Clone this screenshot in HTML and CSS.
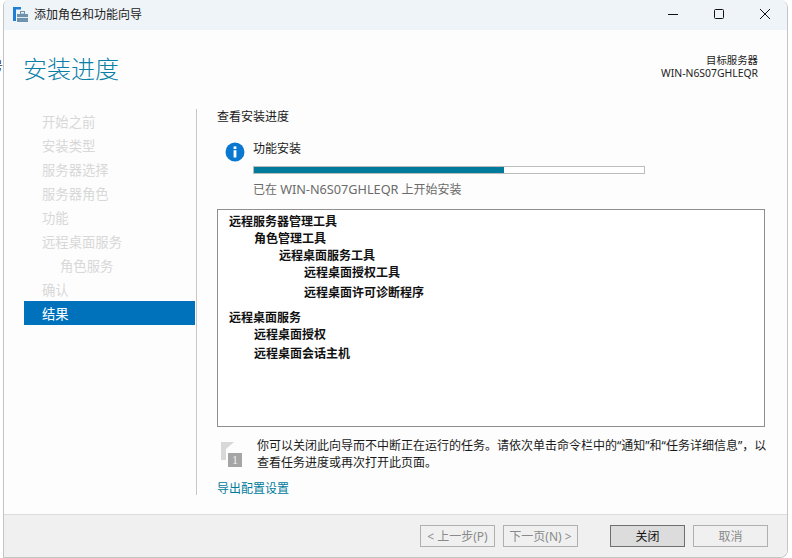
FILE: index.html
```html
<!DOCTYPE html>
<html lang="zh-CN">
<head>
<meta charset="utf-8">
<title>添加角色和功能向导</title>
<link rel="stylesheet" href="styles.css">
</head>
<body>
<div class="stray">号</div>
<div class="window">
  <header class="titlebar">
    <svg class="app-icon" width="15" height="15" viewBox="0 0 15 15"><path d="M0 0h8v2.600H3V14H0z" fill="#1f7fd6"/><rect x="4" y="7" width="11" height="8" fill="#6f93ad"/><rect x="7.500" y="4.500" width="4" height="2.600" fill="none" stroke="#6f93ad"/><rect x="4" y="10" width="11" height="1" fill="#dfe8ee"/></svg>
    <span class="title-text">添加角色和功能向导</span>
    <div class="controls">
      <svg width="12" height="12" viewBox="0 0 12 12"><path d="M1 6.500h10" stroke="#111" stroke-width="1" fill="none"/></svg>
      <svg width="12" height="12" viewBox="0 0 12 12"><rect x="1.500" y="1.500" width="9" height="9" rx="1" stroke="#111" fill="none"/></svg>
      <svg width="12" height="12" viewBox="0 0 12 12"><path d="M1 1l10 10M11 1L1 11" stroke="#111" fill="none"/></svg>
    </div>
  </header>
  <div class="head">
    <h1>安装进度</h1>
    <div class="target"><div>目标服务器</div><div>WIN-N6S07GHLEQR</div></div>
  </div>
  <div class="main">
    <nav class="side">
      <div class="step">开始之前</div>
      <div class="step">安装类型</div>
      <div class="step">服务器选择</div>
      <div class="step">服务器角色</div>
      <div class="step">功能</div>
      <div class="step">远程桌面服务</div>
      <div class="step sub">角色服务</div>
      <div class="step">确认</div>
      <div class="step active">结果</div>
    </nav>
    <section class="content">
      <div class="caption">查看安装进度</div>
      <div class="status">
        <svg class="info" width="20" height="20" viewBox="0 0 20 20"><circle cx="10" cy="10" r="9.500" fill="#0a78d0"/><rect x="8.600" y="8.200" width="2.800" height="7.300" fill="#fff"/><rect x="8.600" y="4.400" width="2.800" height="2.600" fill="#fff"/></svg>
        <div class="status-body">
          <div class="status-name">功能安装</div>
          <div class="bar"><div class="fill" style="width:64.1%"></div></div>
          <div class="status-note">已在 <span class="host">WIN-N6S07GHLEQR</span> 上开始安装</div>
        </div>
      </div>
      <div class="tree">
        <div class="row l0 r1">远程服务器管理工具</div>
        <div class="row l1 r1">角色管理工具</div>
        <div class="row l2 r1">远程桌面服务工具</div>
        <div class="row l3 r1">远程桌面授权工具</div>
        <div class="row l3 r2">远程桌面许可诊断程序</div>
        <div class="row l0 r3">远程桌面服务</div>
        <div class="row l1 r1">远程桌面授权</div>
        <div class="row l1 r4">远程桌面会话主机</div>
      </div>
      <div class="notice">
        <div class="flag">
          <svg width="22" height="28" viewBox="0 0 22 28"><path d="M0 0h13L5 7v11H0z" fill="#d8d8d8"/><rect x="7" y="11" width="14" height="14" fill="#a5a5a5"/></svg>
          <span class="flag-num">1</span>
        </div>
        <p>你可以关闭此向导而不中断正在运行的任务。请依次单击命令栏中的“通知”和“任务详细信息”，以<br>查看任务进度或再次打开此页面。</p>
      </div>
      <a class="export">导出配置设置</a>
    </section>
  </div>
  <footer class="footer">
    <button class="btn" disabled>&lt; 上一步(P)</button>
    <button class="btn" disabled>下一页(N) &gt;</button>
    <button class="btn primary">关闭</button>
    <button class="btn" disabled>取消</button>
  </footer>
</div>
</body>
</html>
```
FILE: styles.css
```css
* { box-sizing: border-box; }
html, body { margin: 0; height: 100%; overflow: hidden; }
body {
  width: 792px;
  height: 558px;
  background: #fff;
  font-family: "Noto Sans", "Noto Sans CJK SC", sans-serif;
  font-size: 12px;
  color: #1a1a1a;
  padding: 0 4px 0 3px;
  position: relative;
}
.stray {
  position: absolute;
  left: -9px;
  top: 60px;
  font-size: 12px;
  line-height: 14px;
  color: #333;
}
.window {
  width: 785px;
  height: 558px;
  border: 1px solid #c4c4c4;
  border-top: 0;
  border-radius: 6px 8px 8px 0;
  background: #fdfdfd;
  display: flex;
  flex-direction: column;
  position: relative;
  overflow: hidden;
}
.titlebar {
  height: 30px;
  flex: none;
  background: #eff4f9;
  display: flex;
  align-items: center;
  padding-left: 9px;
}
.app-icon { flex: none; margin-top: -2px; }
.title-text { margin-left: 6px; font-size: 12px; line-height: 16px; color: #222; }
.controls {
  margin-left: auto;
  display: flex;
  gap: 34px;
  margin-right: 16px;
  margin-top: -2px;
}
.head {
  height: 79px;
  flex: none;
  display: flex;
  justify-content: space-between;
  padding: 21px 29px 0 19px;
}
h1 {
  margin: 0;
  font-size: 24px;
  font-weight: 300;
  line-height: 36px;
  color: #0a7fa8;
}
.target { text-align: right; font-size: 10.4px; line-height: 13px; padding-top: 3px; color: #222; }
.main { flex: 1; display: flex; min-height: 0; }
.side { width: 171px; margin-left: 20px; flex: none; }
.step {
  height: 24px;
  line-height: 26px;
  padding-left: 18px;
  font-size: 13.33px;
  color: #d8d8d8;
}
.step.sub { padding-left: 36px; }
.step.active { background: #0072bc; color: #fff; }
.content {
  width: 573px;
  height: 386px;
  margin-left: 1px;
  border-left: 1px solid #c8c8c8;
  padding-left: 20px;
  display: flex;
  flex-direction: column;
}
.caption { line-height: 14px; padding-top: 1px; flex: none; }
.status { display: flex; margin: 17px 0 0 8px; height: 62px; flex: none; }
.info { flex: none; margin-top: 1px; }
.status-body { margin-left: 8px; width: 392px; }
.status-name { line-height: 14px; padding-top: 1px; }
.bar { height: 8px; margin-top: 10px; border: 1px solid #bcbcbc; background: #fff; }
.fill { height: 100%; background: #007b9c; }
.status-note { line-height: 14px; margin-top: 8px; color: #6b6b6b; }
.host { font-size: 12.7px; }
.tree {
  width: 548px;
  height: 218px;
  margin-top: 6px;
  border: 1px solid #8f8f8f;
  background: #fff;
  padding-top: 4px;
  flex: none;
}
.row { font-weight: 700; line-height: 16px; color: #111; }
.row.r1 { margin-bottom: 1px; }
.row.r2 { margin-top: 4px; }
.row.r3 { margin-top: 9px; margin-bottom: 1px; }
.row.r4 { margin-top: 3px; }
.l0 { padding-left: 11px; }
.l1 { padding-left: 36px; }
.l2 { padding-left: 61px; }
.l3 { padding-left: 86px; }
.notice { display: flex; margin-top: 12px; height: 32px; flex: none; }
.flag { width: 40px; flex: none; position: relative; padding: 3px 0 0 4px; }
.flag-num {
  position: absolute;
  left: 11px;
  top: 14px;
  width: 14px;
  text-align: center;
  font: 12px/14px "Liberation Serif", serif;
  color: #f0f0f0;
}
.notice p { margin: -2px 0 0; line-height: 17px; color: #1a1a1a; white-space: nowrap; }
.export { margin-top: 11px; line-height: 14px; color: #007b9c; flex: none; }
.footer {
  height: 43px;
  flex: none;
  background: #f0f0f0;
  border-top: 1px solid #dcdcdc;
  display: flex;
  align-items: flex-start;
  padding: 10px 19px 0 416px;
}
.btn {
  width: 75px;
  height: 22px;
  border: 1px solid #b0b0b0;
  background: #f0f0f0;
  font: 12px/18px "Noto Sans", "Noto Sans CJK SC", sans-serif;
  padding: 1px 0 0;
  color: #8a8a8a;
  margin-right: 8px;
}
.btn:nth-child(3) { margin-left: 24px; }
.btn:last-child { margin-right: 0; }
.btn.primary { background: #dcdcdc; border-color: #6f6f6f; color: #111; }
```
